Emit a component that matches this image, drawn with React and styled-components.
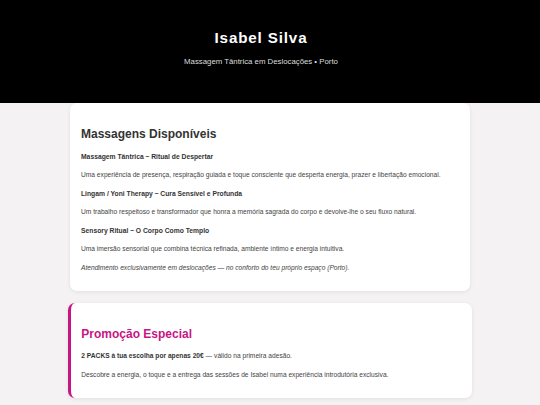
import React from "react";
import styled, { createGlobalStyle } from "styled-components";

const GlobalStyle = createGlobalStyle`
  html, body {
    margin: 0;
    padding: 0;
    background: #f5f2f3;
    font-family: "Liberation Sans", Arial, sans-serif;
    color: #333;
    -webkit-font-smoothing: antialiased;
  }
  * { box-sizing: border-box; }
`;

const services = [
  {
    title: "Massagem Tântrica – Ritual de Despertar",
    text: "Uma experiência de presença, respiração guiada e toque consciente que desperta energia, prazer e libertação emocional.",
  },
  {
    title: "Lingam / Yoni Therapy – Cura Sensível e Profunda",
    text: "Um trabalho respeitoso e transformador que honra a memória sagrada do corpo e devolve-lhe o seu fluxo natural.",
  },
  {
    title: "Sensory Ritual – O Corpo Como Templo",
    text: "Uma imersão sensorial que combina técnica refinada, ambiente íntimo e energia intuitiva.",
  },
];

const App = () => (
  <>
    <GlobalStyle />
    <Header>
      <Title>Isabel Silva</Title>
      <Subtitle>Massagem Tântrica em Deslocações • Porto</Subtitle>
    </Header>
    <Main>
      <Card>
        <CardTitle>Massagens Disponíveis</CardTitle>
        {services.map((s) => (
          <React.Fragment key={s.title}>
            <ServiceTitle>{s.title}</ServiceTitle>
            <Text>{s.text}</Text>
          </React.Fragment>
        ))}
        <Note>Atendimento exclusivamente em deslocações — no conforto do teu próprio espaço (Porto).</Note>
      </Card>
      <Card highlight>
        <CardTitle highlight>Promoção Especial</CardTitle>
        <Text tight>
          <strong>2 PACKS à tua escolha por apenas 20€</strong> — válido na primeira adesão.
        </Text>
        <Text>
          Descobre a energia, o toque e a entrega das sessões de Isabel numa experiência introdutória exclusiva.
        </Text>
      </Card>
    </Main>
  </>
);

export default App;

const Header = styled.header`
  background: #000;
  color: #fff;
  text-align: center;
  padding: 29px 38px 36px 20px;
  height: 103px;
`;

const Title = styled.h1`
  margin: 0;
  font-size: 15.2px;
  line-height: 18px;
  font-weight: 700;
  letter-spacing: 0.85px;
`;

const Subtitle = styled.p`
  margin: 10px 0 0;
  font-size: 7.8px;
  line-height: 10px;
  color: #ddd;
`;

const Main = styled.main`
  width: 400px;
  margin: 0 auto;
  display: flex;
  flex-direction: column;
  gap: 12px;
  padding-bottom: 20px;
`;

const Card = styled.section`
  background: #fff;
  border-radius: 7px;
  box-shadow: 0 1px 4px rgba(0, 0, 0, 0.08);
  padding: ${({ highlight }) => (highlight ? "12px 11px 18px 10px" : "12px 11px 18px")};
  margin: ${({ highlight }) => (highlight ? "0 -1.7px" : "0")};
  border-left: ${({ highlight }) => (highlight ? "3px solid #c71585" : "none")};
`;

const CardTitle = styled.h2`
  margin: ${({ highlight }) => (highlight ? "12px 0 10px" : "12px 0 11px")};
  font-size: 12px;
  line-height: 14px;
  font-weight: 700;
  color: ${({ highlight }) => (highlight ? "#c71585" : "#333")};
`;

const ServiceTitle = styled.h3`
  margin: 0 0 7.5px;
  font-size: 6.75px;
  line-height: 10px;
  font-weight: 700;
  color: #333;
`;

const Text = styled.p`
  margin: 0 0 ${({ tight }) => (tight ? "8.5px" : "9.5px")};
  font-size: 6.65px;
  line-height: 10px;
  color: #444;

  &:last-child {
    margin-bottom: 0;
  }

  strong {
    color: #333;
  }
`;

const Note = styled.p`
  margin: 0;
  font-size: 6.65px;
  line-height: 10px;
  font-style: italic;
  color: #444;
`;
